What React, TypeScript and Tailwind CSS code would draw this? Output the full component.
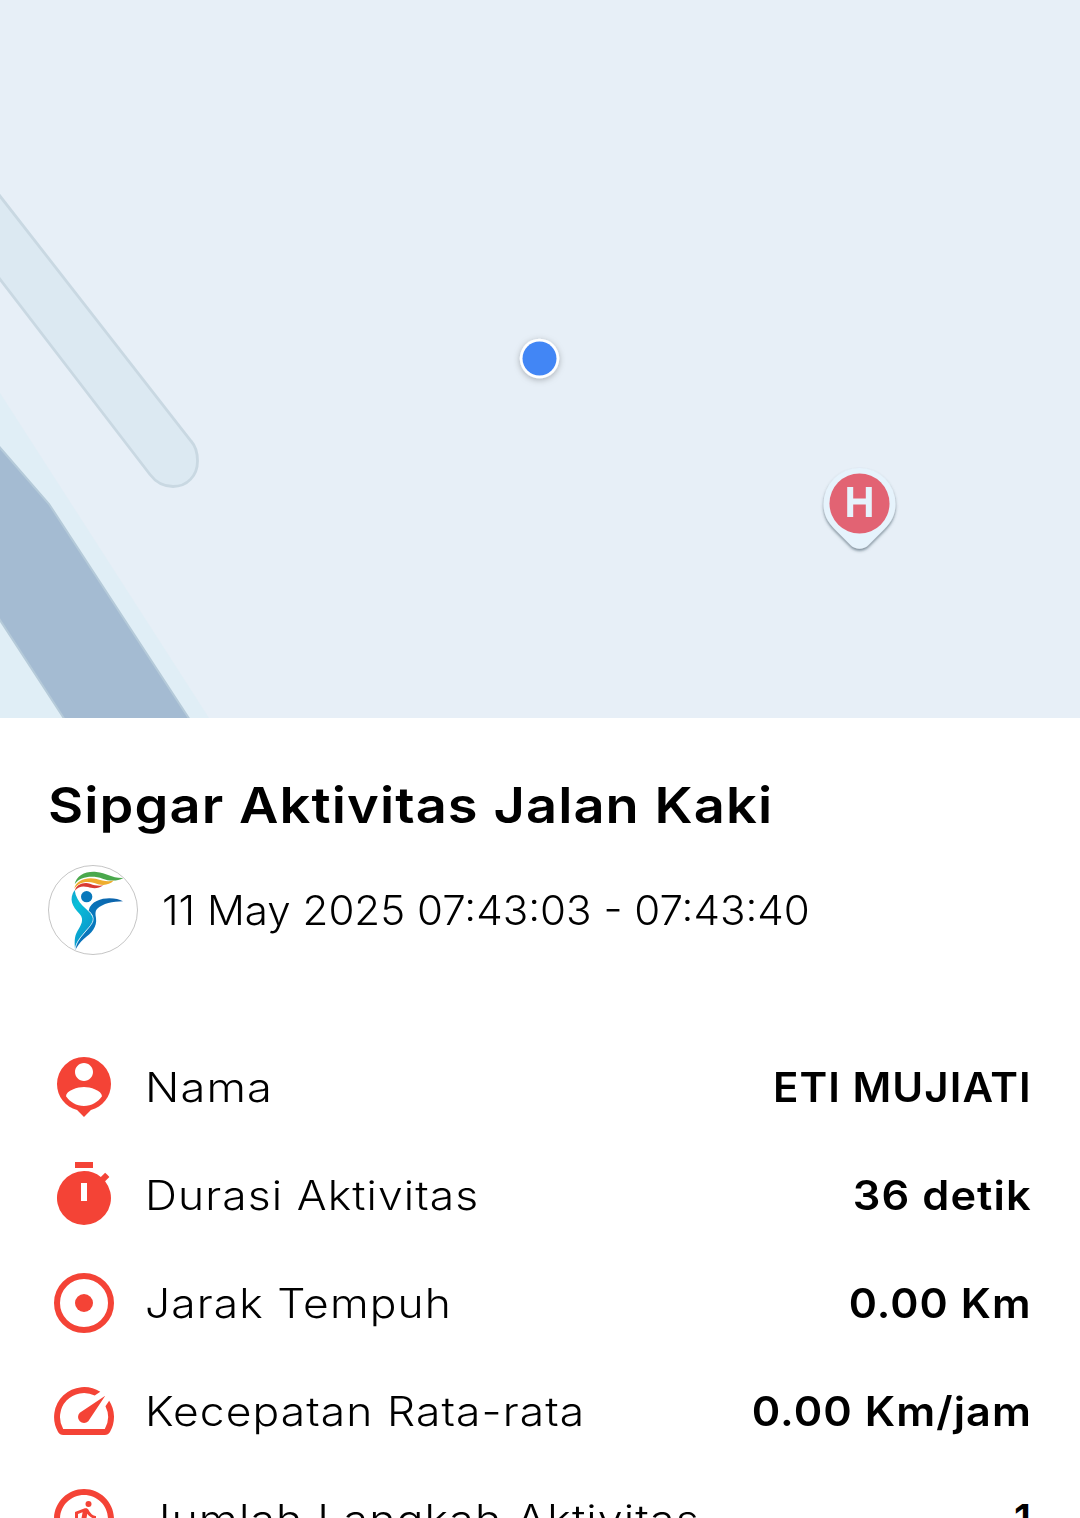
import type { ReactNode } from "react";
import clsx from "clsx";
import { MdOutlineRunCircle, MdSpeed } from "react-icons/md";

interface ActivityStat {
  label: string;
  value: string;
  icon: ReactNode;
  labelClass: string;
  valueClass: string;
}

function PersonPinIcon() {
  return (
    <svg viewBox="0 0 24 24" className="size-[72px]" fill="currentColor">
      <path
        fillRule="evenodd"
        d="M12 2a9 9 0 0 0-9 9c0 4.17 2.84 7.67 6.69 8.69L12 22l2.31-2.31C18.16 18.67 21 15.17 21 11a9 9 0 0 0-9-9zm0 2c1.66 0 3 1.34 3 3s-1.34 3-3 3-3-1.34-3-3 1.34-3 3-3zm0 14.3c-2.5 0-4.71-1.28-6-3.22.03-1.99 4-3.08 6-3.08 1.99 0 5.97 1.09 6 3.08-1.29 1.94-3.5 3.22-6 3.22z"
      />
    </svg>
  );
}

function TimerIcon() {
  return (
    <svg viewBox="0 0 24 24" className="size-[72px]" fill="currentColor">
      <path d="M9 1h6v2H9z" />
      <path
        fillRule="evenodd"
        d="M19.03 7.39l1.42-1.42c-.43-.51-.9-.99-1.41-1.41l-1.42 1.42A8.962 8.962 0 0 0 12 4a9 9 0 1 0 7.03 3.39zM11 8h2v6h-2z"
      />
    </svg>
  );
}

function DistanceIcon() {
  return (
    <svg viewBox="0 0 24 24" className="size-[72px]">
      <circle cx="12" cy="12" r="9" fill="none" stroke="currentColor" strokeWidth="2" />
      <circle cx="12" cy="12" r="3" fill="currentColor" />
    </svg>
  );
}

const stats: ActivityStat[] = [
  {
    label: "Nama",
    value: "ETI MUJIATI",
    icon: <PersonPinIcon />,
    labelClass: "scale-x-[1.12]",
    valueClass: "scale-x-[1.04]",
  },
  {
    label: "Durasi Aktivitas",
    value: "36 detik",
    icon: <TimerIcon />,
    labelClass: "scale-x-[1.098]",
    valueClass: "scale-x-[1.073]",
  },
  {
    label: "Jarak Tempuh",
    value: "0.00 Km",
    icon: <DistanceIcon />,
    labelClass: "scale-x-[1.098]",
    valueClass: "scale-x-[1.06]",
  },
  {
    label: "Kecepatan Rata-rata",
    value: "0.00 Km/jam",
    icon: <MdSpeed className="size-[72px]" />,
    labelClass: "scale-x-[1.098]",
    valueClass: "scale-x-[1.07]",
  },
  {
    label: "Jumlah Langkah Aktivitas",
    value: "1",
    icon: <MdOutlineRunCircle className="size-[72px]" />,
    labelClass: "scale-x-[1.106]",
    valueClass: "scale-x-100",
  },
];

function ActivityMap() {
  return (
    <svg viewBox="0 0 1080 718" className="block h-[718px] w-full shrink-0 bg-[#e7eff7]">
      <defs>
        <filter id="dot-shadow" x="-50%" y="-50%" width="200%" height="200%">
          <feDropShadow dx="0" dy="1.5" stdDeviation="3" floodColor="#000" floodOpacity="0.28" />
        </filter>
        <filter id="pin-shadow" x="-50%" y="-50%" width="200%" height="200%">
          <feDropShadow dx="0" dy="2" stdDeviation="1.8" floodColor="#3c5564" floodOpacity="0.65" />
        </filter>
      </defs>

      {/* River bank and main road */}
      <path d="M0 393L209 718H0z" fill="#e0eef6" />
      <path
        d="M-4 443L49 504L190 720H65L-4 614z"
        fill="#a4bbd2"
        stroke="#b5cad9"
        strokeWidth="2"
      />

      {/* Side road */}
      <path
        d="M-4 191L191 441C195.500 446 197.500 454 197.500 461C197.500 476 187 486.500 173 486.500C164 486.500 156 482.500 150 474.500L-4 274z"
        fill="#dce9f2"
        stroke="#c9d8e2"
        strokeWidth="2.8"
      />

      {/* Current position */}
      <circle cx="539.5" cy="358.5" r="19.7" fill="#fff" filter="url(#dot-shadow)" />
      <circle cx="539.5" cy="358.5" r="17" fill="#4286f5" />

      {/* Hospital marker */}
      <path
        d="M859.500 468a36 36 0 0 1 36 36c0 10-4 18-11 25l-16 16c-5 5-13 5-18 0l-16-16c-7-7-11-15-11-25a36 36 0 0 1 36-36z"
        fill="#e6f3fc"
        filter="url(#pin-shadow)"
      />
      <circle cx="859.500" cy="503.500" r="30" fill="#e26373" />
      <path d="M850.200 487v30M868.800 487v30M850.200 501.500h18.600" stroke="#e6f3fc" strokeWidth="6" />
    </svg>
  );
}

function SipgarLogo() {
  return (
    <svg viewBox="24 30 270 270" className="size-[90px] shrink-0">
      <defs>
        <linearGradient id="body-cyan" x1="0" y1="0" x2="0.5" y2="1">
          <stop offset="0" stopColor="#12a5cf" />
          <stop offset="0.3" stopColor="#09bfd8" />
          <stop offset="1" stopColor="#0a94cb" />
        </linearGradient>
        <linearGradient id="body-blue" x1="1" y1="0" x2="0" y2="1">
          <stop offset="0" stopColor="#0d5fa8" />
          <stop offset="0.5" stopColor="#0879bd" />
          <stop offset="1" stopColor="#0870b9" />
        </linearGradient>
      </defs>
      <circle cx="159" cy="165" r="133.500" fill="#fff" stroke="#8a8a8a" strokeWidth="1.500" />
      <path
        d="M104 88C109 62 137 48 169 51C200 54 214 70 250 69C230 80 207 78 188 71C158 61 120 64 104 88z"
        fill="#4aa84c"
      />
      <path
        d="M103 101C107 76 140 65 167 71C189 77 203 82 222 76C205 94 183 92 163 84C137 76 113 84 103 101z"
        fill="#efad2e"
      />
      <path
        d="M105 107C107 90 130 80 150 86C166 92 176 93 190 91C174 103 156 100 144 96C128 92 115 94 105 107z"
        fill="#d93a31"
      />
      <circle cx="140" cy="125" r="17" fill="#0878bb" />
      <path
        d="M146 167C152 139 184 130 208 130C226 130 238 133 249 139C219 140 188 145 171 162C165 169 166 178 168 189C172 216 154 235 132 251C119 262 113 272 106 285C107 264 120 250 134 233C151 213 164 196 158 182C156 176 151 171 146 167z"
        fill="url(#body-blue)"
      />
      <path
        d="M104 105C86 132 96 153 119 177C134 194 123 210 112 229C102 246 104 265 105 282C109 258 125 245 139 226C155 207 166 194 155 179C144 163 109 146 104 105z"
        fill="url(#body-cyan)"
      />
      <path
        d="M153 177C170 196 151 212 135 231C120 248 108 263 106 282"
        fill="none"
        stroke="#fff"
        strokeWidth="2"
      />
    </svg>
  );
}

function StatRow({ stat }: { stat: ActivityStat }) {
  return (
    <div className="flex h-[108px] shrink-0 items-center justify-between">
      <div className="flex items-center gap-[25px]">
        <span className="text-[#f44336]">{stat.icon}</span>
        <span
          className={clsx(
            "origin-left whitespace-nowrap pt-0.5 font-light tracking-[1px]",
            stat.labelClass
          )}
        >
          {stat.label}
        </span>
      </div>
      <span
        className={clsx(
          "origin-right whitespace-nowrap pt-0.5 font-semibold tracking-[1px]",
          stat.valueClass
        )}
      >
        {stat.value}
      </span>
    </div>
  );
}

export default function App() {
  return (
    <main className="flex h-[1518px] w-[1080px] flex-col overflow-hidden bg-white font-['Inter',sans-serif] text-[40.400px] leading-[52px] text-black">
      <ActivityMap />
      <section className="flex shrink-0 flex-col px-12 pt-[54px]">
        <h1 className="origin-left scale-x-[1.084] whitespace-nowrap text-[50px] font-semibold leading-[66px] tracking-[1px]">
          Sipgar Aktivitas Jalan Kaki
        </h1>
        <div className="mt-[27px] flex items-center gap-6">
          <SipgarLogo />
          <p className="origin-left scale-x-[1.042] whitespace-nowrap pt-0.5 font-light">
            11 May 2025 07:43:03 - 07:43:40
          </p>
        </div>
        <div className="mt-[78px] flex flex-col">
          {stats.map((stat) => (
            <StatRow key={stat.label} stat={stat} />
          ))}
        </div>
      </section>
    </main>
  );
}
